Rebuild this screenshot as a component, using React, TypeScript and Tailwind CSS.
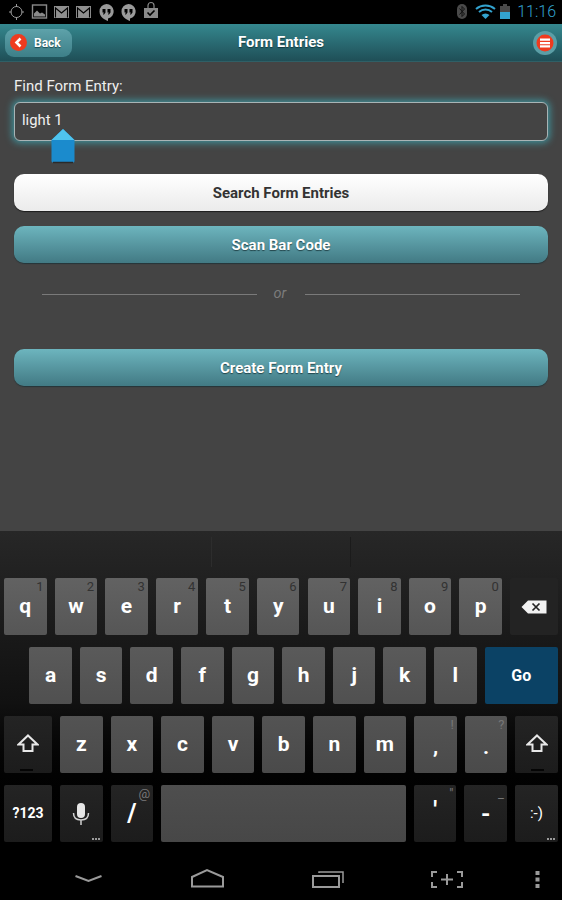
import React from "react";

const FONT = "font-['Roboto','Liberation_Sans',sans-serif]";

// ---- status bar icons ----
function StatusLeft() {
  return (
    <div className="flex items-center">
      <svg width="160" height="24" viewBox="0 0 160 24" className="ml-[8px]" fill="none">
        {/* gps */}
        <circle cx="8.500" cy="12" r="5.500" stroke="#9a9a9a" strokeWidth="1" />
        <path d="M8.500 4v3M8.500 17v3M1 12h2.500M13.500 12H16" stroke="#9a9a9a" strokeWidth="1" />
        {/* picture */}
        <rect x="24.500" y="5" width="14" height="13" stroke="#8a8a8a" strokeWidth="1.400" />
        <path d="M26 16.500v-3l3-3 3 3 2-1 3 2v2z" fill="#8a8a8a" />
        {/* gmail */}
        <rect x="46" y="6" width="15" height="12" fill="#8f8f8f" />
        <path d="M47.500 17.500V8l6 5 6-5v9.500" stroke="#000" strokeWidth="1.100" />
        <rect x="68" y="6" width="15" height="12" fill="#8f8f8f" />
        <path d="M69.500 17.500V8l6 5 6-5v9.500" stroke="#000" strokeWidth="1.100" />
        {/* hangouts */}
        <path d="M98.500 4a7.400 7.400 0 0 1 1.500 14.600V21c-3-1-8.500-4-8.500-9.500A7.300 7.300 0 0 1 98.500 4z" fill="#9a9a9a" />
        <path d="M94.500 9h3v3.500l-1.500 2h-1l.8-2h-1.300zM99.500 9h3v3.500l-1.500 2h-1l.8-2h-1.300z" fill="#000" />
        <path d="M120.500 4a7.400 7.400 0 0 1 1.500 14.600V21c-3-1-8.500-4-8.500-9.500A7.300 7.300 0 0 1 120.500 4z" fill="#9a9a9a" />
        <path d="M116.500 9h3v3.500l-1.500 2h-1l.8-2h-1.300zM121.500 9h3v3.500l-1.500 2h-1l.8-2h-1.300z" fill="#000" />
        {/* play store bag */}
        <path d="M136 8h14v10h-14z" fill="#8a8a8a" />
        <path d="M140 8V5.500a3 3 0 0 1 6 0V8" stroke="#8a8a8a" strokeWidth="1.200" />
        <path d="M139.500 12.500l2.500 2.500 4.500-4.500" stroke="#000" strokeWidth="1.600" />
      </svg>
    </div>
  );
}

function StatusRight() {
  return (
    <div className="flex items-center">
      <svg width="54" height="24" viewBox="0 0 54 24" fill="none">
        {/* bluetooth */}
        <rect x="0" y="4" width="10" height="15" rx="5" fill="#4a4a4a" />
        <path d="M2.500 8.500l5 5.500-2.500 2.500V6.500L7.500 9l-5 5.500" stroke="#111" strokeWidth="1" />
        {/* wifi */}
        <path d="M19 9a15 15 0 0 1 19 0" stroke="#33a3cf" strokeWidth="2" />
        <path d="M22 12a10 10 0 0 1 13 0" stroke="#33a3cf" strokeWidth="2" />
        <path d="M24.500 15a6 6 0 0 1 8 0L28.500 19z" fill="#33a3cf" />
        {/* battery */}
        <rect x="43" y="8" width="10" height="11" fill="#33a3cf" />
        <rect x="43" y="6" width="10" height="6" fill="#4a4a4a" />
        <rect x="46" y="4" width="4" height="2" fill="#4a4a4a" />
      </svg>
      <span className="ml-[6px] mr-[6px] text-[16px] leading-[24px] text-[#33a3cf] font-light">11:16</span>
    </div>
  );
}

function Header() {
  return (
    <div className="grid h-[38px] grid-cols-[1fr_auto_1fr] items-center border-b border-[#2f5f66] bg-gradient-to-b from-[#35888f] to-[#1f4f57] pl-[5px] pr-[5px]">
      <div className="flex h-[28px] w-[67px] items-center rounded-[9px] bg-gradient-to-b from-[#5ea2aa] to-[#3d7f88] pl-[5px]">
        <svg width="17" height="17" viewBox="0 0 17 17">
          <circle cx="8.500" cy="8.500" r="8.500" fill="#ef3b1f" />
          <path d="M10.500 4.500L6.500 8.500l4 4" fill="none" stroke="#fff" strokeWidth="2.600" />
        </svg>
        <span className="ml-[7px] text-[12px] font-bold text-white [text-shadow:0_1px_1px_#1c4a50]">Back</span>
      </div>
      <span className="text-[15px] font-bold text-white [text-shadow:0_1px_1px_#123a40]">Form Entries</span>
      <div className="flex h-[24px] w-[24px] items-center justify-center justify-self-end rounded-full bg-[#5b9ea6]">
        <svg width="18" height="18" viewBox="0 0 18 18">
          <circle cx="9" cy="9" r="8.500" fill="#ef3b1f" />
          <path d="M4 4.500h10v2.300H4zM4 7.900h10v2.300H4zM4 11.300h10v2.300H4z" fill="#fff" />
        </svg>
      </div>
    </div>
  );
}

function TealButton({ label, className = "" }: { label: string; className?: string }) {
  return (
    <div
      className={`flex h-[37px] items-center justify-center rounded-[10px] bg-gradient-to-b from-[#6db5be] to-[#427a84] pt-px text-[15px] font-bold text-white shadow-[0_1px_1px_#25363a] [text-shadow:0_1px_1px_#23454b] ${className}`}
    >
      {label}
    </div>
  );
}

function Content() {
  return (
    <div className="relative flex-1 bg-[#444444] px-[14px] pt-[14px]">
      <div className="h-[20px] text-[15px] leading-[20px] text-[#eeeeee]">Find Form Entry:</div>
      <div className="mt-[6px] flex h-[39px] items-center rounded-[6px] border border-[#a8b4b6] bg-[#444444] pb-[3px] pl-[7px] text-[14.800px] text-[#f0f0f0] shadow-[0_0_7px_2px_#3f8f98]">
        light 1
      </div>
      {/* text cursor handle */}
      <svg width="26" height="36" viewBox="0 0 26 36" className="absolute left-[50px] top-[66px]">
        <path d="M1.500 12L13 1l11.500 11v21a1.500 1.500 0 0 1-1.500 1.500H3A1.500 1.500 0 0 1 1.500 33z" fill="#1b8bcd" />
        <path d="M1.500 12L13 1l11.500 11z" fill="#4fc4ee" />
        <path d="M3 34.500h20" stroke="#2a2a2a" strokeWidth="1.500" />
      </svg>
      <div className="mt-[33px] flex h-[37px] items-center justify-center rounded-[10px] bg-gradient-to-b from-white to-[#ebebeb] pt-px text-[15px] font-bold text-[#333333] shadow-[0_1px_1px_#1c1c1c]">
        Search Form Entries
      </div>
      <TealButton label="Scan Bar Code" className="mt-[15px]" />
      <div className="mt-[20px] flex h-[22px] items-center pl-[28px] pr-[28px]">
        <div className="h-px flex-1 bg-[#7a7a7a]" />
        <span className="w-[48px] pr-[2px] text-center text-[14.500px] italic text-[#7c7c7c]">or</span>
        <div className="h-px flex-1 bg-[#7a7a7a]" />
      </div>
      <TealButton label="Create Form Entry" className="mt-[44px]" />
    </div>
  );
}

// ---- keyboard ----
type KeyProps = {
  label?: React.ReactNode;
  hint?: string;
  grey?: boolean;
  wide?: boolean;
  grow?: boolean;
  go?: boolean;
  tone: string;
  size?: string;
  labelClass?: string;
};

function Dots() {
  return (
    <span className="absolute bottom-[2px] right-[3px] flex gap-px">
      <i className="h-[2px] w-[2px] bg-[#9a9a9a]" />
      <i className="h-[2px] w-[2px] bg-[#9a9a9a]" />
      <i className="h-[2px] w-[2px] bg-[#9a9a9a]" />
    </span>
  );
}

function Key({ label, hint, grey, wide, grow, go, tone, size = "text-[21px]", labelClass = "" }: KeyProps) {
  const width = grow ? "flex-1" : wide ? "w-[48px]" : "w-[42.500px]";
  const bg = go ? "bg-[#0b4265]" : tone;
  return (
    <div className={`relative flex h-[57px] items-center justify-center rounded-[2px] ${width} ${bg}`}>
      {hint && (
        <span className={`absolute right-[3px] top-[1px] text-[13px] leading-[16px] ${grey ? "text-[#777777]" : "text-[#323232]"}`}>
          {hint}
        </span>
      )}
      <span className={`font-bold text-white ${size} ${labelClass}`}>{label}</span>
    </div>
  );
}

const ShiftIcon = () => (
  <svg width="22" height="22" viewBox="0 0 22 22" className="mb-[2px]">
    <path d="M11 2.500L20.500 11.500H15.500V18H6.500V11.500H1.500z" fill="none" stroke="#e8e8e8" strokeWidth="2" />
  </svg>
);

function ShiftKey({ tone, width }: { tone: string; width: string }) {
  return (
    <div className={`relative flex h-[57px] items-center justify-center rounded-[2px] ${width} ${tone}`}>
      <ShiftIcon />
      <span className="absolute bottom-[2px] left-[16px] h-[2px] w-[13px] bg-[#050505]" />
    </div>
  );
}

const row1 = [
  ["q", "1"],
  ["w", "2"],
  ["e", "3"],
  ["r", "4"],
  ["t", "5"],
  ["y", "6"],
  ["u", "7"],
  ["i", "8"],
  ["o", "9"],
  ["p", "0"],
];
const row2 = ["a", "s", "d", "f", "g", "h", "j", "k", "l"];
const row3 = ["z", "x", "c", "v", "b", "n", "m"];

const LIGHT1 = "bg-gradient-to-b from-[#626262] to-[#565656]";
const LIGHT2 = "bg-gradient-to-b from-[#5a5a5a] to-[#505050]";
const LIGHT3 = "bg-gradient-to-b from-[#535353] to-[#4a4a4a]";
const LIGHT4 = "bg-gradient-to-b from-[#4e4e4e] to-[#474747]";
const DARK1 = "bg-[#232323]";
const DARK3 = "bg-gradient-to-b from-[#242424] to-[#1c1c1c]";

function Keyboard() {
  return (
    <div className="h-[312px] bg-gradient-to-b from-[#272727] via-[#111111] via-[55%] to-[#000000]">
      {/* candidate strip */}
      <div className="flex h-[47px] justify-center gap-[138px] pt-[6px]">
        <div className="h-[30px] w-px bg-[#2d2d2d]" />
        <div className="h-[30px] w-px bg-[#1b1b1b]" />
      </div>
      <div className="flex gap-[8.100px] pl-[4px] pr-[4px]">
        {row1.map(([k, h]) => (
          <Key key={k} label={k} hint={h} tone={LIGHT1} />
        ))}
        <div className={`flex h-[57px] flex-1 items-center justify-center rounded-[2px] ${DARK1}`}>
          <svg width="26" height="14" viewBox="0 0 26 14">
            <path d="M7 0.500H25.500V13.500H7L0.500 7z" fill="#f2f2f2" />
            <path d="M11.500 3.500l7 7M18.500 3.500l-7 7" stroke="#222" strokeWidth="1.700" />
          </svg>
        </div>
      </div>
      <div className="mt-[12px] flex gap-[8.100px] pl-[29.300px] pr-[4px]">
        {row2.map((k) => (
          <Key key={k} label={k} tone={LIGHT2} />
        ))}
        <Key label="Go" go grow tone="" size="text-[16px]" />
      </div>
      <div className="mt-[12px] flex gap-[8.100px] pl-[4px] pr-[4px]">
        <ShiftKey tone={DARK3} width="w-[48px]" />
        {row3.map((k) => (
          <Key key={k} label={k} tone={LIGHT3} />
        ))}
        <Key label="," hint="!" grey tone={LIGHT3} labelClass="mt-[4px]" />
        <Key label="." hint="?" grey tone={LIGHT3} labelClass="mt-[6px]" />
        <ShiftKey tone={DARK3} width="flex-1" />
      </div>
      <div className="mt-[12px] flex gap-[8.100px] pl-[4px] pr-[4px]">
        <Key label="?123" wide tone={DARK3} size="text-[14px]" />
        <div className={`relative flex h-[57px] w-[42.500px] items-center justify-center rounded-[2px] ${DARK3}`}>
          <svg width="18" height="24" viewBox="0 0 18 24">
            <rect x="5" y="1" width="8" height="15" rx="4" fill="#e6e6e6" />
            <path d="M1.500 11c0 4.500 3 7 7.500 7s7.500-2.500 7.500-7M9 18v5" fill="none" stroke="#d0d0d0" strokeWidth="1.500" />
          </svg>
          <Dots />
        </div>
        <Key label="/" hint="@" grey tone={DARK3} size="text-[25px]" />
        <Key grow tone={LIGHT4} />
        <Key label="'" hint={'"'} grey tone={DARK3} size="text-[24px]" labelClass="-mt-[8px]" />
        <Key label="-" hint="_" grey tone={DARK3} size="text-[24px]" />
        <div className={`relative flex h-[57px] w-[43px] items-center justify-center rounded-[2px] ${DARK3}`}>
          <span className="text-[15px] text-white">:-)</span>
          <Dots />
        </div>
      </div>
    </div>
  );
}

function NavBar() {
  return (
    <div className="h-[57px] bg-black">
      <svg width="562" height="57" viewBox="0 0 562 57" fill="none" stroke="#9a9a9a" strokeWidth="2">
        <path d="M75.500 33l13 5 13-5" />
        <path d="M192 43.500V34l15-7 16 7v9.500z" />
        <path d="M313 33h26v11h-26z" />
        <path d="M319 30v-1h24v11" strokeWidth="1.500" />
        <path d="M437 29h-5v5M457 29h5v5M437 44h-5v-5M457 44h5v-5M441 36.500h12M447 31v11" />
        <path d="M537.500 28v4M537.500 34.500v4M537.500 41v4" strokeWidth="4" />
      </svg>
    </div>
  );
}

export default function App() {
  return (
    <div className={`flex h-[900px] w-[562px] flex-col overflow-hidden bg-black ${FONT}`}>
      <div className="flex h-[24px] items-center justify-between bg-black">
        <StatusLeft />
        <StatusRight />
      </div>
      <Header />
      <Content />
      <Keyboard />
      <NavBar />
    </div>
  );
}
